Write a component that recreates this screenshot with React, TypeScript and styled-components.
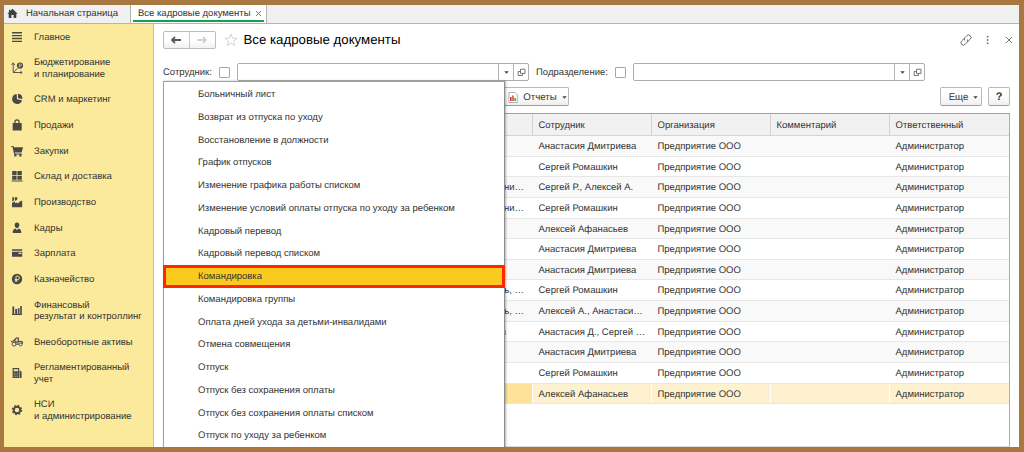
import React from "react";
import styled, { createGlobalStyle, css } from "styled-components";

const GlobalStyle = createGlobalStyle`
  * { box-sizing: border-box; }
  html, body { margin: 0; padding: 0; }
  body {
    font-family: "Liberation Sans", Arial, sans-serif;
    font-size: 9.5px;
    color: #333;
    text-rendering: geometricPrecision;
  }
`;

const Frame = styled.div`
  width: 1024px;
  height: 452px;
  padding: 5px 5px 5px 4px;
  background: #a97841;
  overflow: hidden;
`;

const Window = styled.div`
  height: 442px;
  display: flex;
  flex-direction: column;
  background: #fff;
  overflow: hidden;
`;

const TabBar = styled.div`
  display: flex;
  flex: none;
  height: 19px;
  background: #f0f0f0;
  border-bottom: 1px solid #b4b4b4;
`;

const HomeTab = styled.div`
  display: flex;
  align-items: center;
  width: 127px;
  padding: 0 0 2px 3px;
  gap: 8px;
  border-right: 1px solid #b4b4b4;
`;

const ActiveTab = styled.div`
  display: flex;
  align-items: center;
  justify-content: space-between;
  width: 136px;
  height: 18px;
  padding: 0 4px 2px 7px;
  background: linear-gradient(#14a053, #14a053) 2px 15px / 131px 2px no-repeat #fff;
  border-right: 1px solid #b4b4b4;
  white-space: nowrap;
`;

const Body = styled.div`
  display: flex;
  flex: 1;
  min-height: 0;
`;

const Sidebar = styled.nav`
  flex: none;
  width: 150px;
  background: #fcea9c;
  border-right: 1px solid #d8c46e;
`;

const SideItem = styled.div<{ $tall?: boolean }>`
  display: flex;
  align-items: center;
  height: ${(p) => (p.$tall ? 37 : 25.65)}px;
  padding-left: 6px;
  gap: 10px;
`;

const SideLabel = styled.span`
  padding-top: 1.4px;
  line-height: 11.4px;
  white-space: pre-line;
`;

const SideIcon = styled.svg`
  flex: none;
  width: 14px;
  height: 14px;
  fill: #484848;
`;

const Content = styled.main`
  position: relative;
  flex: 1;
  min-width: 0;
  display: flex;
  flex-direction: column;
  padding: 6px 5px 0 9px;
`;

const TitleRow = styled.header`
  display: flex;
  align-items: center;
  height: 19px;
`;

const NavButtons = styled.div`
  display: flex;
  width: 52.5px;
  height: 18px;
  border: 1px solid #bdbdbd;
  border-radius: 2px;
  background: linear-gradient(#fff 50%, #f1f1f1);
`;

const NavButton = styled.div`
  flex: 1;
  display: flex;
  align-items: center;
  justify-content: center;
  & + & {
    border-left: 1px solid #c8c8c8;
  }
`;

const Star = styled.svg`
  margin-left: 8px;
`;

const Title = styled.h1`
  margin: 0 auto 0 6px;
  font-size: 13.25px;
  font-weight: 400;
  color: #000;
`;

const Filters = styled.div`
  display: flex;
  align-items: center;
  height: 18px;
  margin-top: 14px;
`;

const Label = styled.span<{ $w: number }>`
  width: ${(p) => p.$w}px;
  padding-top: 1px;
  white-space: nowrap;
`;

const CheckBox = styled.span`
  width: 11px;
  height: 11px;
  border: 1px solid #a6a6a6;
  border-radius: 1px;
`;

const Field = styled.div<{ $gap: number }>`
  display: flex;
  justify-content: flex-end;
  width: 292px;
  height: 18px;
  margin: 0 ${(p) => p.$gap}px 0 7px;
  border: 1px solid #adadad;
  border-radius: 2px;
`;

const FieldButton = styled.span`
  display: flex;
  align-items: center;
  justify-content: center;
  width: 15px;
  border-left: 1px solid #b4b4b4;
`;

const Commands = styled.div`
  display: flex;
  height: 19px;
  margin-top: 6px;
  padding-right: 4px;
  gap: 6px;
`;

const Button = styled.div<{ $w: number; $bold?: boolean }>`
  display: flex;
  align-items: center;
  justify-content: center;
  gap: 5px;
  width: ${(p) => p.$w}px;
  height: 19px;
  padding-top: 1px;
  border: 1px solid #b9b9b9;
  border-bottom-color: #9c9c9c;
  border-radius: 2px;
  background: linear-gradient(#fff 40%, #eee);
  font-size: ${(p) => (p.$bold ? 11 : 9.7)}px;
  font-weight: ${(p) => (p.$bold ? 700 : 400)};
`;

const ReportsButton = styled(Button)`
  margin: 0 auto 0 337px;
  padding-left: 6px;
`;

const MoreButton = styled(Button)`
  padding-left: 5px;
`;

const Table = styled.div`
  flex: 1;
  margin-top: 7px;
  width: 847px;
  border: 1px solid #adadad;
  border-top-color: #a0a0a0;
  border-bottom-color: #dcdcdc;
`;

const columns = css`
  display: grid;
  grid-template-columns: 369px 119px 119px 119px 1fr;
`;

const HeadRow = styled.div`
  ${columns}
  height: 22px;
  background: #f1f1f1;
  border-bottom: 1px solid #d4d4d4;
`;

const HeadCell = styled.div`
  padding-left: 5.5px;
  line-height: 21px;
  padding-top: 1px;
  height: 21px;
  border-right: 1px solid #d2d2d2;
  &:last-child {
    border-right: 0;
  }
`;

const Row = styled.div<{ $alt: boolean; $selected: boolean }>`
  ${columns}
  height: 20.63px;
  background: ${(p) => (p.$selected ? "#fdf1cf" : p.$alt ? "#f9f9f9" : "#fff")};
  border-bottom: 1px solid #e6e6e6;
`;

const Cell = styled.div<{ $selected?: boolean; $active?: boolean }>`
  padding-left: 5.5px;
  line-height: 21.6px;
  white-space: nowrap;
  overflow: hidden;
  border-right: 1px solid ${(p) => (p.$selected ? "#fff" : "transparent")};
  ${(p) =>
    p.$active &&
    css`
      background: #fee29a;
    `}
`;

const TailCell = styled(Cell)<{ $inset: number }>`
  text-align: right;
  padding-right: ${(p) => p.$inset}px;
`;

const Menu = styled.div`
  position: absolute;
  left: 9px;
  top: 57px;
  width: 342px;
  height: 370px;
  padding-top: 1px;
  background: #fff;
  border: 1px solid #a2a2a2;
  border-right-color: #8d8d8d;
  box-shadow: 1px 0 2px rgba(0, 0, 0, 0.3);
`;

const MenuItem = styled.div<{ $active: boolean }>`
  height: 22.78px;
  padding-left: 34px;
  line-height: 24.6px;
  ${(p) =>
    p.$active &&
    css`
      margin: 0 -1px;
      padding-left: 32px;
      line-height: 18.6px;
      border: 3px solid #ff2600;
      background: #fbca1e;
    `}
`;

const sections: { label: string; icon: React.ReactNode }[] = [
  { label: "Главное", icon: <path d="M2 2h10v1.400H2zM2 4.900h10v1.400H2zM2 7.800h10v1.400H2zM2 10.700h10v1.400H2z" /> },
  {
    label: "Бюджетирование\nи планирование",
    icon: (
      <>
        <path d="M3.200 2v9.500H12M1.600 4 3.200 1.800 4.800 4M10.500 10l1.700 1.500L10.500 13M3.200 11.500l4.400-4.200" fill="none" stroke="#555" strokeWidth="1" />
        <circle cx="10" cy="4.600" r="3.100" />
        <path d="M9.400 6.600V3h1.200a1 1 0 0 1 0 2H8.700" fill="none" stroke="#fcea9c" strokeWidth=".6" />
      </>
    ),
  },
  { label: "CRM и маркетинг", icon: <path d="M6.700 2a5 5 0 1 0 5.300 6.200L7 7.200zM8 1.800 8 6.200l4.400.8A5 5 0 0 0 8 1.800z" /> },
  { label: "Продажи", icon: <path d="M2.700 5h9v7.400h-9zM4.300 5V4a2.700 2.700 0 0 1 5.400 0v1H8.500V4a1.500 1.500 0 0 0-3 0v1z" /> },
  { label: "Закупки", icon: <path d="M1.200 2h2.300l.4 1.200H13l-1.400 5.200H4.800l.2 1h6.800v1H4.200L2.500 3H1.200zM4.300 10.300h2.200v2.200H4.300zM9.300 10.300h2.200v2.200H9.300z" /> },
  { label: "Склад и доставка", icon: <path d="M2.200 2h4.400v4H2.200zM7.400 2h4.400v4H7.400zM2.200 6.800h4.400v4H2.200zM7.400 6.800h4.400v4H7.400zM1.600 11.400h11v1H1.600z" /> },
  { label: "Производство", icon: <path d="M2 12.300V8l3-1.700V8l1.400 0V7.200L8 8.600 9.500 6.800l2.700-1.300v6.800zM2.300 6.500V2.200h1.900v3zM5 5V2.200h2.200v2.300L5.500 6z" /> },
  { label: "Кадры", icon: <path d="M7 1.500a2.400 2.400 0 0 1 2.300 2.600C9.300 5.800 8.400 7.200 7 7.200S4.700 5.800 4.700 4.100A2.400 2.400 0 0 1 7 1.500zM2.700 12c0-2.800.8-3.800 2.600-4.400L7 9l1.700-1.400c1.800.6 2.600 1.600 2.600 4.400z" /> },
  { label: "Зарплата", icon: <path fillRule="evenodd" d="M2 3.300h10.200v1.500H2zM2 5.700h10.200v5H2zM8.500 6.700v1.300h3V6.700z" /> },
  {
    label: "Казначейство",
    icon: (
      <>
        <circle cx="7" cy="7" r="5.200" />
        <path d="M6 10V4.200h1.800a1.600 1.600 0 0 1 0 3.300H4.800M4.800 8.800h3" fill="none" stroke="#fcea9c" strokeWidth=".9" />
      </>
    ),
  },
  { label: "Финансовый\nрезультат и контроллинг", icon: <path d="M2.400 3.500h1.800v7.700H2.400zM5.200 6h1.800v5.200H5.200zM7.800 5.200h1.700v6H7.800zM10.200 3h1.600v8.200h-1.600zM2 11h10v.9H2z" /> },
  {
    label: "Внеоборотные активы",
    icon: (
      <g fill="none" stroke="#555" strokeWidth="1">
        <circle cx="4" cy="9.200" r="1.900" />
        <circle cx="10.600" cy="9.400" r="1.500" />
        <path d="M1 6.800 3.300 6l3-2.800h2v3l4 .6V9M5 4.500v2.500h4M6 9.200h3" strokeWidth="1.300" />
      </g>
    ),
  },
  {
    label: "Регламентированный\nучет",
    icon: (
      <>
        <path fillRule="evenodd" d="M2.600 2h6.600v10H2.600zM3.700 3.200v2h4.500v-2zM9.700 4.300l1.900 1.400V12H9.700z" />
        <path d="M3.700 7.200h4.500M3.700 9h4.500M3.700 10.600h4.500" stroke="#fcea9c" strokeWidth=".6" strokeDasharray="1 .7" />
      </>
    ),
  },
  {
    label: "НСИ\nи администрирование",
    icon: (
      <>
        <circle cx="7" cy="7" r="3.200" fill="none" stroke="#484848" strokeWidth="1.900" />
        <circle cx="7" cy="7" r="4.500" fill="none" stroke="#484848" strokeWidth="1.500" strokeDasharray="1.770 1.770" />
      </>
    ),
  },
];

const menuItems = [
  "Больничный лист",
  "Возврат из отпуска по уходу",
  "Восстановление в должности",
  "График отпусков",
  "Изменение графика работы списком",
  "Изменение условий оплаты отпуска по уходу за ребенком",
  "Кадровый перевод",
  "Кадровый перевод списком",
  "Командировка",
  "Командировка группы",
  "Оплата дней ухода за детьми-инвалидами",
  "Отмена совмещения",
  "Отпуск",
  "Отпуск без сохранения оплаты",
  "Отпуск без сохранения оплаты списком",
  "Отпуск по уходу за ребенком",
];

const rows: { tail?: string; inset?: number; person: string }[] = [
  { person: "Анастасия Дмитриева" },
  { person: "Сергей Ромашкин" },
  { tail: "ни…", person: "Сергей Р., Алексей А." },
  { tail: "ни…", person: "Сергей Ромашкин" },
  { person: "Алексей Афанасьев" },
  { person: "Анастасия Дмитриева" },
  { person: "Анастасия Дмитриева" },
  { tail: "ь, …", person: "Сергей Ромашкин" },
  { tail: "ь, …", person: "Алексей А., Анастаси…" },
  { tail: "в", inset: 26, person: "Анастасия Д., Сергей …" },
  { person: "Анастасия Дмитриева" },
  { person: "Сергей Ромашкин" },
  { person: "Алексей Афанасьев" },
];

const Caret = () => (
  <svg width="5" height="3" viewBox="0 0 5 3">
    <path d="M.3.3h4.400L2.500 2.800z" fill="#444" />
  </svg>
);

const Arrow = ({ back }: { back?: boolean }) => (
  <svg width="12" height="10" viewBox="0 0 12 10">
    <path
      d={back ? "M11 5H2M5 2 2 5l3 3" : "M1 5h9M7 2l3 3-3 3"}
      fill="none"
      stroke={back ? "#585858" : "#c6c6c6"}
      strokeWidth={back ? 1.8 : 1.3}
    />
  </svg>
);

const SelectField = ({ gap }: { gap: number }) => (
  <Field $gap={gap}>
    <FieldButton>
      <Caret />
    </FieldButton>
    <FieldButton>
      <svg width="9" height="9" viewBox="0 0 9 9" fill="none" stroke="#666" strokeWidth=".9">
        <path d="M3.500 1.200h4.500v4.200H3.500zM3.300 3.500H1.200v4h4.300V5.600" />
      </svg>
    </FieldButton>
  </Field>
);

export default function App() {
  return (
    <Frame>
      <GlobalStyle />
      <Window>
        <TabBar>
          <HomeTab>
            <svg width="11" height="11" viewBox="0 0 11 11" fill="#404040">
              <path d="M5.500.8 10.700 5.700H9.300V10H6.600V7H4.400v3H1.700V5.700H.3L2 4.100V1.800h1.300v1.100z" />
            </svg>
            Начальная страница
          </HomeTab>
          <ActiveTab>
            Все кадровые документы
            <svg width="7" height="7" viewBox="0 0 7 7" stroke="#666" strokeWidth=".9">
              <path d="M1 1l5 5M6 1 1 6" />
            </svg>
          </ActiveTab>
        </TabBar>
        <Body>
          <Sidebar>
            {sections.map((s) => (
              <SideItem key={s.label} $tall={s.label.includes("\n")}>
                <SideIcon viewBox="0 0 14 14">{s.icon}</SideIcon>
                <SideLabel>{s.label}</SideLabel>
              </SideItem>
            ))}
          </Sidebar>
          <Content>
            <TitleRow>
              <NavButtons>
                <NavButton>
                  <Arrow back />
                </NavButton>
                <NavButton>
                  <Arrow />
                </NavButton>
              </NavButtons>
              <Star width="14" height="14" viewBox="0 0 14 14">
                <path
                  d="M7 .9l1.600 4.200 4.500.2-3.500 2.800 1.200 4.400L7 10l-3.800 2.500 1.200-4.400L.9 5.300l4.500-.2z"
                  fill="none"
                  stroke="#c9c9c9"
                  strokeWidth=".8"
                />
              </Star>
              <Title>Все кадровые документы</Title>
              <svg width="54" height="14" viewBox="0 0 54 14" fill="none" stroke="#666" strokeWidth="1">
                <g transform="rotate(-45 6 7)">
                  <path d="M5.500 4.600H2.300a2.400 2.400 0 0 0 0 4.800h2.700a2.400 2.400 0 0 0 2.300-1.800M6.500 9.400h3.200a2.400 2.400 0 0 0 0-4.800H7a2.400 2.400 0 0 0-2.300 1.800" strokeWidth=".9" />
                </g>
                <path d="M27.600 3v1.600M27.600 6.200v1.600M27.600 9.400V11" strokeWidth="1.600" />
                <path d="M46 4l6 6M52 4l-6 6" strokeWidth=".9" />
              </svg>
            </TitleRow>
            <Filters>
              <Label $w={56}>Сотрудник:</Label>
              <CheckBox />
              <SelectField gap={7} />
              <Label $w={79}>Подразделение:</Label>
              <CheckBox />
              <SelectField gap={0} />
            </Filters>
            <Commands>
              <ReportsButton $w={69}>
                <svg width="10" height="11" viewBox="0 0 10 11">
                  <path d="M.9.500h6l2.400 2.200v7.800H.9z" fill="#fff" stroke="#9aa0a8" strokeWidth=".8" />
                  <path d="M2 5h1.600v4H2z" fill="#e03030" />
                  <path d="M4.200 3.500h1.600V9H4.200z" fill="#e04a30" />
                  <path d="M6.400 6H8v3H6.400z" fill="#2fae4a" />
                </svg>
                Отчеты
                <Caret />
              </ReportsButton>
              <MoreButton $w={42}>
                Еще
                <Caret />
              </MoreButton>
              <Button $w={22} $bold>
                ?
              </Button>
            </Commands>
            <Table>
              <HeadRow>
                <HeadCell />
                <HeadCell>Сотрудник</HeadCell>
                <HeadCell>Организация</HeadCell>
                <HeadCell>Комментарий</HeadCell>
                <HeadCell>Ответственный</HeadCell>
              </HeadRow>
              {rows.map(({ tail, inset = 8, person }, i) => {
                const selected = i === rows.length - 1;
                return (
                  <Row key={i} $alt={i % 2 === 0} $selected={selected}>
                    <TailCell $inset={inset} $selected={selected} $active={selected}>
                      {tail}
                    </TailCell>
                    <Cell $selected={selected}>{person}</Cell>
                    <Cell $selected={selected}>Предприятие ООО</Cell>
                    <Cell $selected={selected} />
                    <Cell>Администратор</Cell>
                  </Row>
                );
              })}
            </Table>
            <Menu>
              {menuItems.map((item) => (
                <MenuItem key={item} $active={item === "Командировка"}>
                  {item}
                </MenuItem>
              ))}
            </Menu>
          </Content>
        </Body>
      </Window>
    </Frame>
  );
}
